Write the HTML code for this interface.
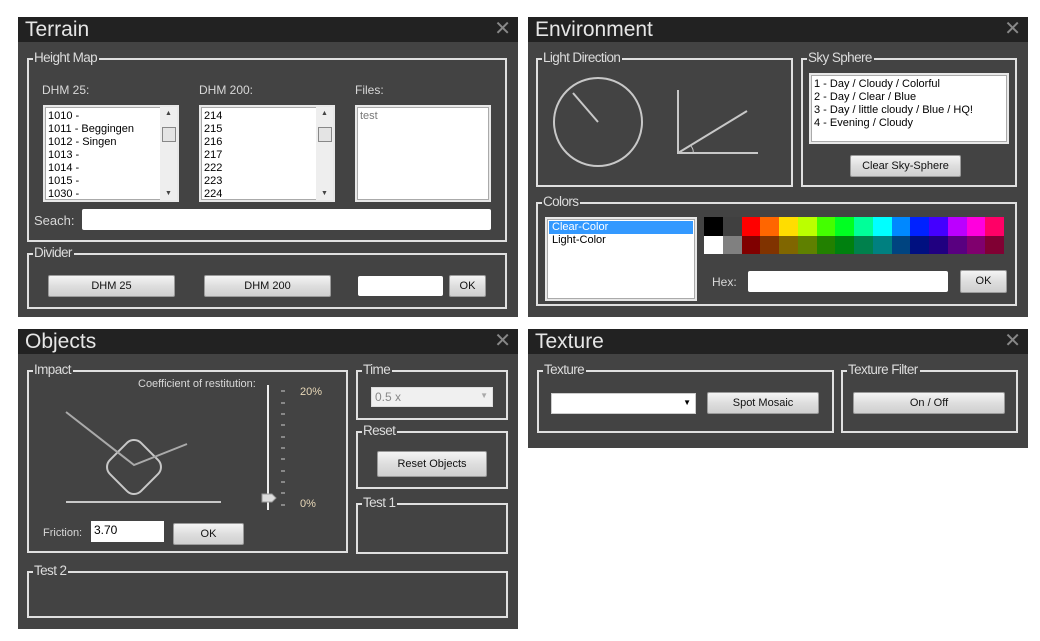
<!DOCTYPE html><html><head><meta charset="utf-8"><style>
*{box-sizing:border-box;margin:0;padding:0}
body{width:1040px;height:641px;background:#fff;position:relative;overflow:hidden;font-family:"Liberation Sans",sans-serif;font-size:12px}
.a{position:absolute}
.pan{position:absolute;background:#434343}
.tb{position:absolute;left:0;top:0;right:0;height:25px;background:#222;color:#e6e6e6;font-size:21px;line-height:25px;padding-left:7px}
.x{position:absolute;right:7px;top:0;color:#888;font-size:20px;line-height:25px}
.g{position:absolute;border:2px solid #e0e0e0}
.gl{position:absolute;top:-10px;left:4px;background:#434343;color:#dcdcdc;font-size:13.5px;letter-spacing:-0.6px;line-height:16px;padding:0 2px 0 1px}
.lb{position:absolute;color:#d8d8d8;font-size:12px}
.box{position:absolute;background:#fff;border:2px solid #e8e8e8;box-shadow:inset 0 0 0 1px #aaa}
.btn{position:absolute;border:1px solid #9a9a9a;border-radius:2px;background:linear-gradient(#f4f4f4,#dedede 50%,#cfcfcf);color:#111;text-align:center;font-size:11px}
.li{font-size:11px;line-height:13px;color:#000;padding-left:3px}
.sb{position:absolute;right:0;top:0;bottom:0;width:17px;background:#eee}
</style></head><body>

<!-- Terrain -->
<div class="pan" style="left:18px;top:17px;width:500px;height:300px">
<div class="tb">Terrain<span class="x">✕</span></div>
</div>
<div class="g" style="left:27px;top:58px;width:480px;height:184px"><span class="gl">Height Map</span></div>
<div class="lb" style="left:42px;top:83px">DHM 25:</div>
<div class="lb" style="left:199px;top:83px">DHM 200:</div>
<div class="lb" style="left:355px;top:83px">Files:</div>
<div class="box" style="left:43px;top:105px;width:136px;height:97px;padding-top:3px">
<div class="li">1010 -</div><div class="li">1011 - Beggingen</div><div class="li">1012 - Singen</div><div class="li">1013 -</div><div class="li">1014 -</div><div class="li">1015 -</div><div class="li">1030 -</div>
<div class="sb"><div class="a" style="left:2px;top:20px;width:14px;height:15px;border:1px solid #888;background:#e4e4e4"></div><div class="a" style="left:5px;top:3px;font-size:7px;color:#444">▲</div><div class="a" style="left:5px;bottom:3px;font-size:7px;color:#444">▼</div></div></div>
<div class="box" style="left:199px;top:105px;width:136px;height:97px;padding-top:3px">
<div class="li">214</div><div class="li">215</div><div class="li">216</div><div class="li">217</div><div class="li">222</div><div class="li">223</div><div class="li">224</div>
<div class="sb"><div class="a" style="left:2px;top:20px;width:14px;height:15px;border:1px solid #888;background:#e4e4e4"></div><div class="a" style="left:5px;top:3px;font-size:7px;color:#444">▲</div><div class="a" style="left:5px;bottom:3px;font-size:7px;color:#444">▼</div></div></div>
<div class="box" style="left:355px;top:105px;width:136px;height:97px;padding-top:3px"><div class="li" style="color:#777">test</div></div>
<div class="lb" style="left:34px;top:213px;font-size:13px">Seach:</div>
<div class="a" style="left:82px;top:209px;width:409px;height:21px;background:#fff;border-radius:2px"></div>
<div class="g" style="left:27px;top:253px;width:480px;height:56px"><span class="gl">Divider</span></div>
<div class="btn" style="left:48px;top:275px;width:127px;height:22px;line-height:20px">DHM 25</div>
<div class="btn" style="left:204px;top:275px;width:127px;height:22px;line-height:20px">DHM 200</div>
<div class="a" style="left:358px;top:276px;width:85px;height:20px;background:#fff;border-radius:2px"></div>
<div class="btn" style="left:449px;top:275px;width:37px;height:22px;line-height:20px">OK</div>

<!-- Environment -->
<div class="pan" style="left:528px;top:17px;width:500px;height:300px">
<div class="tb">Environment<span class="x">✕</span></div>
</div>
<div class="g" style="left:536px;top:58px;width:257px;height:129px"><span class="gl">Light Direction</span></div>
<svg class="a" style="left:536px;top:58px" width="257" height="129"><g fill="none" stroke="#c8c8c8" stroke-width="2"><circle cx="62" cy="64" r="44"/><line x1="62" y1="64" x2="37" y2="35"/><polyline points="142,32 142,95 222,95"/><line x1="142" y1="95" x2="211" y2="53"/><path d="M155,88 Q158,92 157,95" stroke-width="1"/></g></svg>
<div class="g" style="left:801px;top:58px;width:216px;height:129px"><span class="gl">Sky Sphere</span></div>
<div class="box" style="left:809px;top:73px;width:200px;height:71px;padding-top:3px">
<div class="li">1 - Day / Cloudy / Colorful</div><div class="li">2 - Day / Clear / Blue</div><div class="li">3 - Day / little cloudy / Blue / HQ!</div><div class="li">4 - Evening / Cloudy</div></div>
<div class="btn" style="left:850px;top:155px;width:111px;height:22px;line-height:20px">Clear Sky-Sphere</div>
<div class="g" style="left:536px;top:202px;width:481px;height:104px"><span class="gl">Colors</span></div>
<div class="box" style="left:545px;top:217px;width:152px;height:84px;padding:2px 2px">
<div class="li" style="background:#3399ff;color:#fff">Clear-Color</div><div class="li">Light-Color</div></div>
<div class="a" style="left:704px;top:217px;width:300px;height:37px;display:grid;grid-template-columns:repeat(16,1fr);grid-template-rows:1fr 1fr">
<i style="background:#000"></i><i style="background:#404040"></i><i style="background:#f00"></i><i style="background:#f60"></i><i style="background:#fd0"></i><i style="background:#bf0"></i><i style="background:#4f0"></i><i style="background:#0f2"></i><i style="background:#0f9"></i><i style="background:#0ff"></i><i style="background:#08f"></i><i style="background:#02f"></i><i style="background:#40f"></i><i style="background:#b0f"></i><i style="background:#f0d"></i><i style="background:#f06"></i>
<i style="background:#fff"></i><i style="background:#808080"></i><i style="background:#800000"></i><i style="background:#803300"></i><i style="background:#806600"></i><i style="background:#5f8000"></i><i style="background:#228000"></i><i style="background:#00800f"></i><i style="background:#00804c"></i><i style="background:#008080"></i><i style="background:#004480"></i><i style="background:#001080"></i><i style="background:#200080"></i><i style="background:#590080"></i><i style="background:#80006e"></i><i style="background:#800033"></i></div>
<div class="lb" style="left:712px;top:275px">Hex:</div>
<div class="a" style="left:748px;top:271px;width:200px;height:21px;background:#fff;border-radius:2px"></div>
<div class="btn" style="left:960px;top:270px;width:47px;height:23px;line-height:21px">OK</div>

<!-- Objects -->
<div class="pan" style="left:18px;top:329px;width:500px;height:300px">
<div class="tb">Objects<span class="x">✕</span></div>
</div>
<div class="g" style="left:27px;top:370px;width:321px;height:183px"><span class="gl">Impact</span></div>
<div class="lb" style="left:138px;top:378px;font-size:11px">Coefficient of restitution:</div>
<svg class="a" style="left:27px;top:370px" width="321" height="183"><g fill="none" stroke="#c8c8c8" stroke-width="2"><line x1="39" y1="132" x2="194" y2="132"/><rect x="85" y="75" width="44" height="44" rx="10" transform="rotate(45 107 97)"/></g><polyline points="39,42 107,95 160,74" fill="none" stroke="#aaa" stroke-width="2"/><line x1="241" y1="15" x2="241" y2="140" stroke="#eee" stroke-width="2"/><g stroke="#ccc" stroke-width="1"><line x1="254" y1="21" x2="258" y2="21"/><line x1="254" y1="33" x2="258" y2="33"/><line x1="254" y1="44" x2="258" y2="44"/><line x1="254" y1="55" x2="258" y2="55"/><line x1="254" y1="67" x2="258" y2="67"/><line x1="254" y1="78" x2="258" y2="78"/><line x1="254" y1="89" x2="258" y2="89"/><line x1="254" y1="101" x2="258" y2="101"/><line x1="254" y1="112" x2="258" y2="112"/><line x1="254" y1="123" x2="258" y2="123"/><line x1="254" y1="135" x2="258" y2="135"/></g><path d="M235,124 h10 l4,4 l-4,4 h-10 z" fill="#ddd" stroke="#999"/></svg>
<div class="lb" style="left:300px;top:386px;font-size:11px;color:#e8d8b8">20%</div>
<div class="lb" style="left:300px;top:498px;font-size:11px;color:#e8d8b8">0%</div>
<div class="lb" style="left:43px;top:527px;font-size:11px">Friction:</div>
<div class="a" style="left:91px;top:521px;width:73px;height:21px;background:#fff;padding:2px 3px;font-size:12px">3.70</div>
<div class="btn" style="left:173px;top:523px;width:71px;height:22px;line-height:20px">OK</div>
<div class="g" style="left:356px;top:370px;width:152px;height:50px"><span class="gl">Time</span></div>
<div class="a" style="left:371px;top:387px;width:122px;height:20px;background:#f0f0f0;border:1px solid #ddd;color:#888;padding:2px 3px;font-size:12px">0.5 x<span style="position:absolute;right:4px;top:3px;font-size:8px;color:#aaa">▼</span></div>
<div class="g" style="left:356px;top:431px;width:152px;height:58px"><span class="gl">Reset</span></div>
<div class="btn" style="left:377px;top:451px;width:110px;height:26px;line-height:24px">Reset Objects</div>
<div class="g" style="left:356px;top:503px;width:152px;height:51px"><span class="gl">Test 1</span></div>
<div class="g" style="left:27px;top:571px;width:481px;height:47px"><span class="gl">Test 2</span></div>

<!-- Texture -->
<div class="pan" style="left:528px;top:329px;width:500px;height:119px">
<div class="tb">Texture<span class="x">✕</span></div>
</div>
<div class="g" style="left:537px;top:370px;width:297px;height:63px"><span class="gl">Texture</span></div>
<div class="a" style="left:551px;top:393px;width:145px;height:21px;background:#fff;border:1px solid #ccc"><span style="position:absolute;right:4px;top:4px;font-size:8px">▼</span></div>
<div class="btn" style="left:707px;top:392px;width:112px;height:22px;line-height:20px">Spot Mosaic</div>
<div class="g" style="left:841px;top:370px;width:177px;height:63px"><span class="gl">Texture Filter</span></div>
<div class="btn" style="left:853px;top:392px;width:152px;height:22px;line-height:20px">On / Off</div>
</body></html>
